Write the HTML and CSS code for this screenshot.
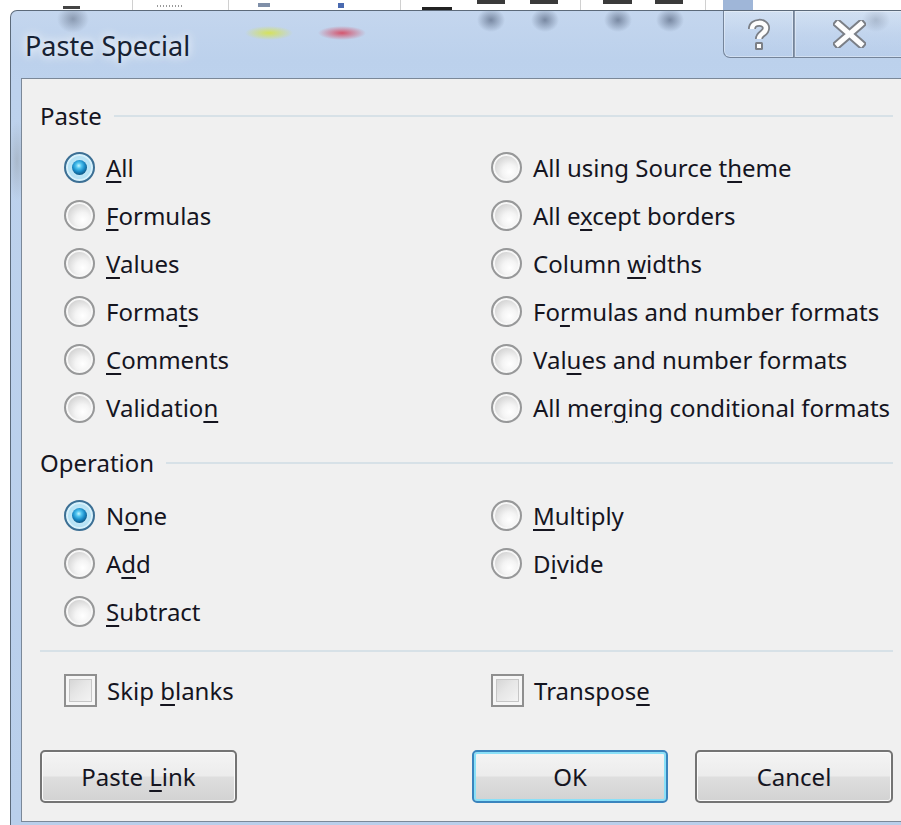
FILE: index.html
```html
<!DOCTYPE html>
<html lang="en">
<head>
<meta charset="utf-8">
<title>Paste Special</title>
<link rel="stylesheet" href="styles.css">
</head>
<body>
<div class="desk"></div>
<div class="window">
  <div class="titlebar">
    <span class="title">Paste Special</span>
    <div class="caption">
      <span class="cap-btn help">
        <svg width="24" height="33" viewBox="0 0 24 33">
          <path d="M5 11 C5 3 19 3 19 10 C19 16 12 15 12 21" fill="none" stroke="#7b7f86" stroke-width="8" stroke-linejoin="round"/>
          <rect x="8" y="24" width="8" height="8" rx="1.5" fill="#7b7f86"/>
          <path d="M5 11 C5 3 19 3 19 10 C19 16 12 15 12 21" fill="none" stroke="#fdfdfd" stroke-width="4.5" stroke-linejoin="round"/>
          <rect x="10" y="26" width="4" height="4" fill="#fdfdfd"/>
        </svg>
      </span>
      <span class="cap-btn close">
        <svg width="33" height="28" viewBox="0 0 33 28">
          <path d="M5 4 L28 24 M28 4 L5 24" stroke="#7b7f86" stroke-width="9" stroke-linecap="square"/>
          <path d="M5 4 L28 24 M28 4 L5 24" stroke="#fdfdfd" stroke-width="5" stroke-linecap="square"/>
        </svg>
      </span>
    </div>
  </div>
  <div class="client">
    <div class="group-head"><span>Paste</span><i class="rule"></i></div>
    <div class="options">
      <label class="opt"><span class="radio on"></span><span><u>A</u>ll</span></label>
      <label class="opt"><span class="radio"></span><span>All using Source t<u>h</u>eme</span></label>
      <label class="opt"><span class="radio"></span><span><u>F</u>ormulas</span></label>
      <label class="opt"><span class="radio"></span><span>All e<u>x</u>cept borders</span></label>
      <label class="opt"><span class="radio"></span><span><u>V</u>alues</span></label>
      <label class="opt"><span class="radio"></span><span>Column <u>w</u>idths</span></label>
      <label class="opt"><span class="radio"></span><span>Forma<u>t</u>s</span></label>
      <label class="opt"><span class="radio"></span><span>Fo<u>r</u>mulas and number formats</span></label>
      <label class="opt"><span class="radio"></span><span><u>C</u>omments</span></label>
      <label class="opt"><span class="radio"></span><span>Val<u>u</u>es and number formats</span></label>
      <label class="opt"><span class="radio"></span><span>Validatio<u>n</u></span></label>
      <label class="opt"><span class="radio"></span><span>All mer<u>g</u>ing conditional formats</span></label>
    </div>

    <div class="group-head op"><span>Operation</span><i class="rule"></i></div>
    <div class="options ops">
      <label class="opt"><span class="radio on"></span><span>N<u>o</u>ne</span></label>
      <label class="opt"><span class="radio"></span><span><u>M</u>ultiply</span></label>
      <label class="opt"><span class="radio"></span><span>A<u>d</u>d</span></label>
      <label class="opt"><span class="radio"></span><span>D<u>i</u>vide</span></label>
      <label class="opt"><span class="radio"></span><span><u>S</u>ubtract</span></label>
    </div>

    <i class="rule full"></i>

    <div class="options checks">
      <label class="opt"><span class="check"></span><span>Skip <u>b</u>lanks</span></label>
      <label class="opt"><span class="check"></span><span>Transpos<u>e</u></span></label>
    </div>

    <div class="buttons">
      <button class="btn link">Paste <u>L</u>ink</button>
      <div class="btn-pair">
        <button class="btn default">OK</button>
        <button class="btn cancel">Cancel</button>
      </div>
    </div>
  </div>
</div>
</body>
</html>
```

FILE: styles.css
```css
* { box-sizing: border-box; }

body {
  margin: 0;
  width: 901px;
  height: 825px;
  overflow: hidden;
  background: #ffffff;
  font-family: "Noto Sans", "Open Sans", sans-serif;
  color: #15151f;
}

/* ribbon fragments peeking above the dialog */
.desk {
  height: 10px;
  background:
    linear-gradient(#3a3a3a, #3a3a3a) 477px 0 / 28px 4px no-repeat,
    linear-gradient(#3a3a3a, #3a3a3a) 530px 0 / 28px 4px no-repeat,
    linear-gradient(#3a3a3a, #3a3a3a) 603px 0 / 29px 4px no-repeat,
    linear-gradient(#3a3a3a, #3a3a3a) 655px 0 / 28px 4px no-repeat,
    linear-gradient(#444, #444) 63px 6px / 17px 3px no-repeat,
    linear-gradient(#222, #222) 422px 7px / 30px 3px no-repeat,
    repeating-linear-gradient(90deg, #999 0 1px, transparent 1px 3px) 157px 5px / 25px 2px no-repeat,
    linear-gradient(#7f8fa8, #7f8fa8) 258px 3px / 12px 4px no-repeat,
    linear-gradient(#4a6ab0, #4a6ab0) 338px 3px / 6px 5px no-repeat,
    linear-gradient(#d0d0d0, #d0d0d0) 132px 0 / 1px 10px no-repeat,
    linear-gradient(#d0d0d0, #d0d0d0) 228px 0 / 1px 10px no-repeat,
    linear-gradient(#d0d0d0, #d0d0d0) 400px 0 / 1px 10px no-repeat,
    linear-gradient(#d0d0d0, #d0d0d0) 580px 0 / 1px 10px no-repeat,
    linear-gradient(#d0d0d0, #d0d0d0) 705px 0 / 1px 10px no-repeat,
    linear-gradient(#9fb6d8, #9fb6d8) 723px 0 / 30px 10px no-repeat,
    #ffffff;
}

/* Aero glass frame */
.window {
  margin-left: 10px;
  width: 905px;
  padding: 0 10px 3px 10px;
  border: 1px solid #5c6a7a;
  border-bottom: none;
  border-radius: 7px 0 0 0;
  background:
    radial-gradient(ellipse 24px 7px at 258px 22px, rgba(214, 226, 84, 0.95), rgba(214, 226, 84, 0) 100%),
    radial-gradient(ellipse 24px 7px at 331px 22px, rgba(214, 72, 96, 0.9), rgba(214, 72, 96, 0) 100%),
    radial-gradient(ellipse 16px 14px at 62px 8px, rgba(70, 82, 104, 0.45), rgba(70, 82, 104, 0) 100%),
    radial-gradient(ellipse 14px 12px at 480px 9px, rgba(60, 74, 100, 0.55), rgba(60, 74, 100, 0) 100%),
    radial-gradient(ellipse 14px 12px at 534px 9px, rgba(60, 74, 100, 0.55), rgba(60, 74, 100, 0) 100%),
    radial-gradient(ellipse 14px 12px at 607px 9px, rgba(60, 74, 100, 0.55), rgba(60, 74, 100, 0) 100%),
    radial-gradient(ellipse 14px 12px at 659px 9px, rgba(60, 74, 100, 0.55), rgba(60, 74, 100, 0) 100%),
    radial-gradient(ellipse 14px 12px at 865px 9px, rgba(60, 74, 100, 0.45), rgba(60, 74, 100, 0) 100%),
    radial-gradient(ellipse 10px 40px at 6px 150px, rgba(150, 160, 170, 0.5), rgba(150, 160, 170, 0) 100%),
    linear-gradient(180deg, #c4d6ee 0%, #bcd1ec 6%, #bdd2ed 9%, #b9cfeb 100%);
}

.titlebar {
  height: 67px;
  display: flex;
  align-items: flex-start;
}

.title {
  padding: 17px 0 0 4px;
  font-size: 27px;
  line-height: 36px;
  color: #172233;
  text-shadow: 0 0 8px rgba(255, 255, 255, 0.9), 0 0 14px rgba(255, 255, 255, 0.7);
}

.caption {
  margin-left: auto;
  display: flex;
  height: 47px;
}

.cap-btn {
  display: flex;
  align-items: center;
  justify-content: center;
  height: 47px;
  border: 1px solid #74849a;
  border-top: none;
  background: linear-gradient(180deg, rgba(220, 232, 246, 0.55) 0%, rgba(196, 214, 238, 0.35) 50%, rgba(178, 200, 232, 0.4) 100%);
  box-shadow: inset 0 0 0 1px rgba(255, 255, 255, 0.35);
}

.cap-btn.help {
  width: 71px;
  border-radius: 0 0 0 7px;
}

.cap-btn.close {
  width: 110px;
  border-left: 1px solid #8a98ab;
}

/* client area */
.client {
  border: 1px solid #7b8898;
  background: #f0f0f0;
  padding: 22px 10px 18px 18px;
  font-size: 24px;
}

u {
  text-decoration-thickness: 2px;
  text-underline-offset: 4px;
}

.group-head {
  display: flex;
  align-items: center;
  gap: 12px;
  height: 30px;
  line-height: 30px;
}

.group-head.op { margin-top: 17px; }

.rule {
  display: block;
  flex: 1;
  height: 2px;
  background: #d7e1e7;
}

.rule.full { margin-top: 15px; }

.options {
  display: grid;
  grid-template-columns: 427px 1fr;
  grid-auto-rows: 48px;
  padding-left: 24px;
  margin-top: 12px;
}

.options.ops { margin-top: 13px; }

.options.checks { margin-top: 14px; }

.opt {
  display: flex;
  align-items: center;
  gap: 11px;
  white-space: nowrap;
}

/* Windows 7 style radio button */
.radio {
  flex: none;
  width: 31px;
  height: 31px;
  border-radius: 50%;
  border: 2px solid #979899;
  background: radial-gradient(circle at 62% 66%, #ffffff 0%, #f4f4f4 30%, #dadada 62%, #c8c8c8 80%);
  box-shadow: inset 0 0 0 2px #f7f7f7;
  display: grid;
  place-items: center;
}

.radio.on {
  border-color: #3c6f94;
  background: radial-gradient(circle, #cfeefb 0%, #b5e1f4 60%, #9dd3ec 100%);
  box-shadow: inset 0 0 0 2px #d8f1fb;
}

.radio.on::after {
  content: "";
  width: 15px;
  height: 15px;
  border-radius: 50%;
  background: radial-gradient(circle at 45% 38%, #c4f6ff 0%, #4fc4f0 22%, #1a8cc8 48%, #0b4f7c 78%, #0a2e4a 100%);
}

/* Windows 7 style checkbox */
.check {
  flex: none;
  width: 33px;
  height: 33px;
  border: 2px solid #8f8f8f;
  background: linear-gradient(135deg, #cfcfcf 0%, #e6e6e6 45%, #f8f8f8 100%);
  box-shadow: inset 0 0 0 3px #f6f6f6, inset 0 0 0 4px #c6c6c6;
}

.checks .opt { gap: 10px; }

.buttons {
  display: flex;
  margin-top: 36px;
}

.btn-pair {
  margin-left: auto;
  display: flex;
  gap: 27px;
}

.btn {
  height: 53px;
  font: inherit;
  font-size: 24px;
  color: #15151f;
  border: 2px solid #747474;
  border-radius: 5px;
  background: linear-gradient(180deg, #f4f4f4 0%, #ececec 48%, #dedede 52%, #d2d2d2 100%);
  box-shadow: inset 0 0 0 1px #fbfbfb;
  padding: 0;
}

.btn.link { width: 197px; }
.btn.default {
  width: 196px;
  border-color: #3a84bd;
  box-shadow: inset 0 0 0 2px #8ae0f8;
}
.btn.cancel { width: 198px; }
```
